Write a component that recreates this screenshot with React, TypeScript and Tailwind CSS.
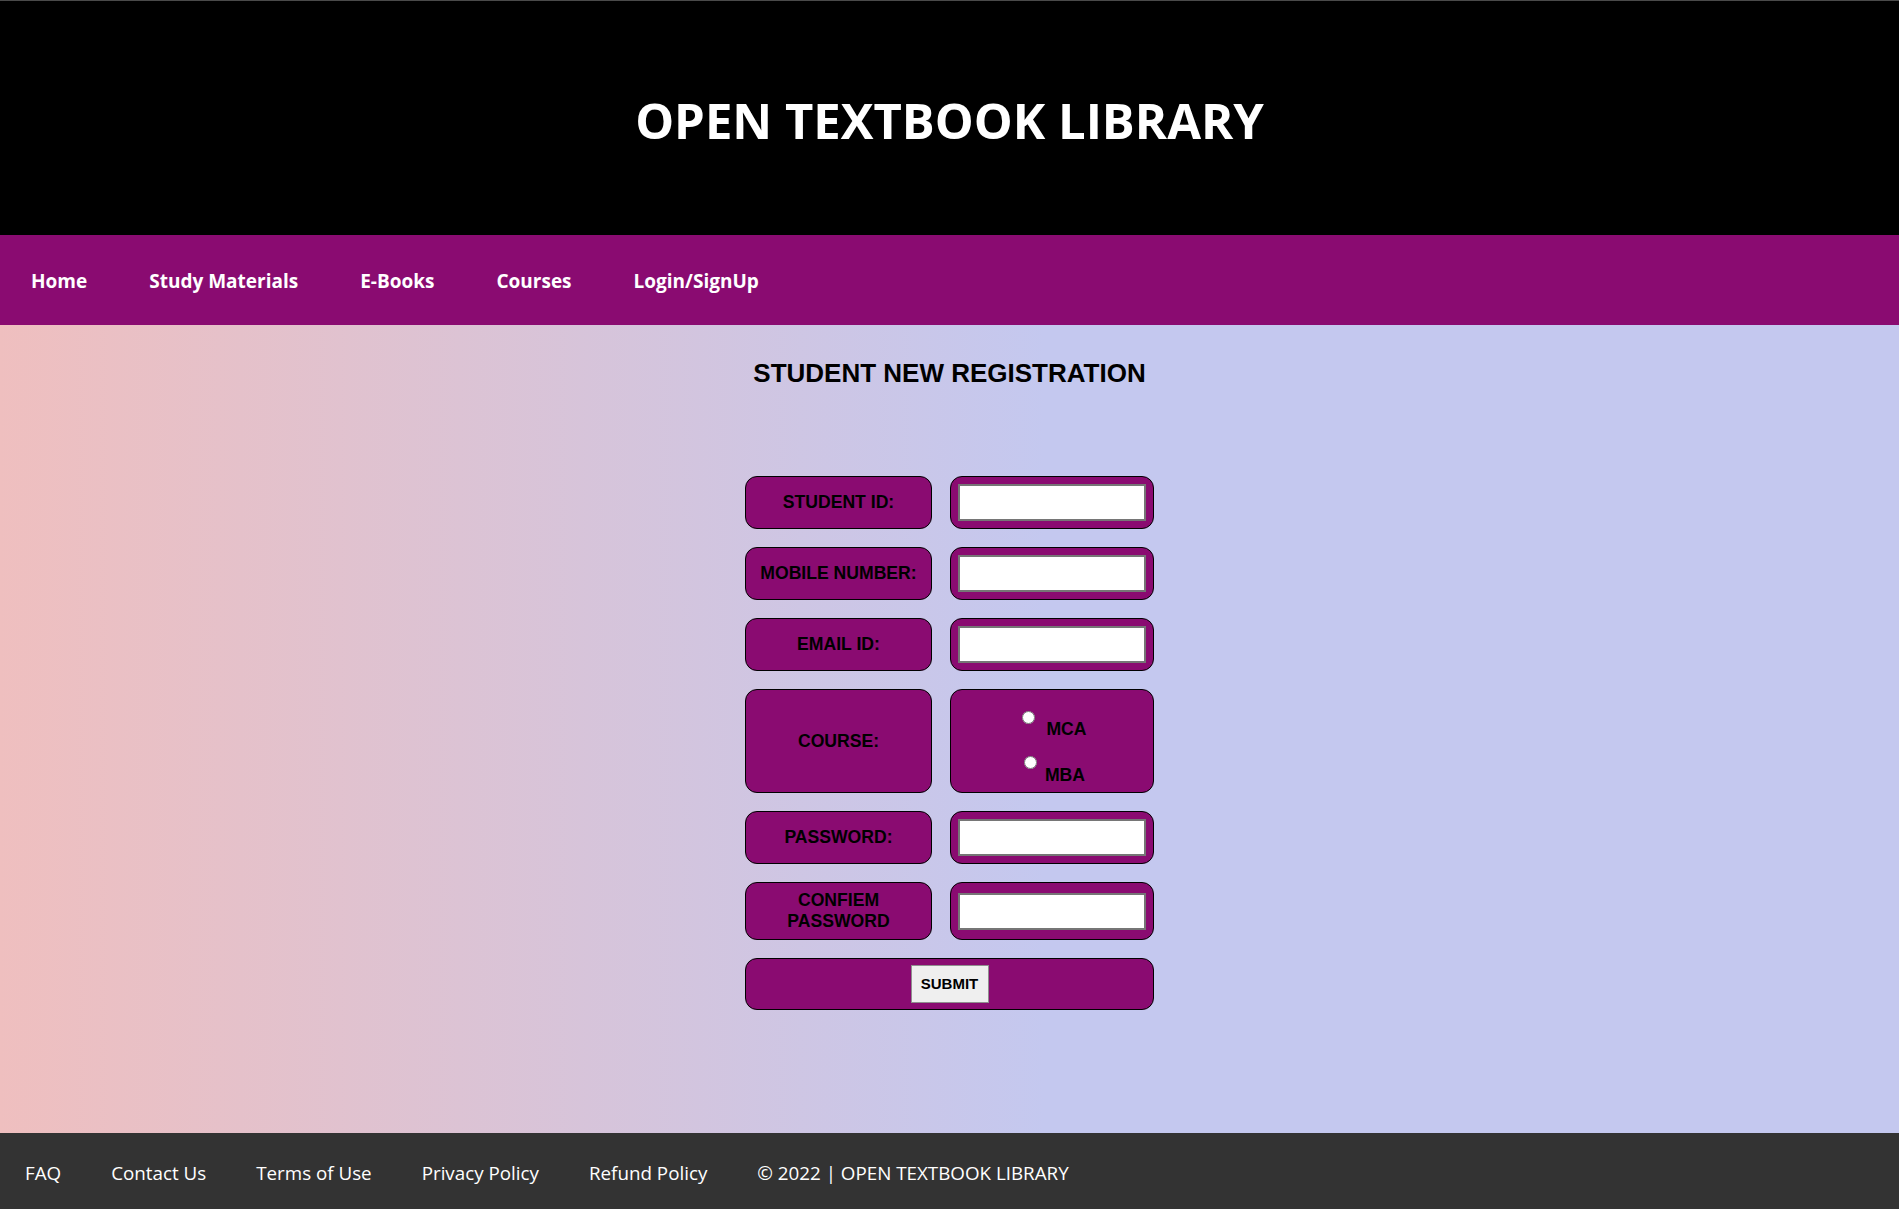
import React from "react";

const navLinks = ["Home", "Study Materials", "E-Books", "Courses", "Login/SignUp"];
const footerLinks = ["FAQ", "Contact Us", "Terms of Use", "Privacy Policy", "Refund Policy", "© 2022 | OPEN TEXTBOOK LIBRARY"];

function LabelCell({ children }: { children: React.ReactNode }) {
  return (
    <div className="flex items-center justify-center text-center border border-black rounded-[12px] bg-[#8a0b71] px-[7px] py-[7px] text-[17.6px] leading-[21px] font-bold text-black">
      {children}
    </div>
  );
}

function InputCell({ type = "text" }: { type?: string }) {
  return (
    <div className="flex items-center border border-black rounded-[12px] bg-[#8a0b71] px-[7px] py-[7px]">
      <input type={type} className="block w-full h-[37px] bg-white border-2 border-[#767676] outline-none px-[2px]" />
    </div>
  );
}

export default function App() {
  return (
    <div className="min-h-screen flex flex-col font-['Liberation_Sans',Arial,sans-serif]">
      <header className="h-[235px] bg-black border-t border-[#4a4a4a] flex items-center justify-center pt-[4px]">
        <h1 className="text-white font-bold text-[49px] leading-[60px] font-['Open_Sans',sans-serif]">
          OPEN TEXTBOOK LIBRARY
        </h1>
      </header>
      <nav className="h-[90px] bg-[#8a0b71] flex items-center font-['Open_Sans',sans-serif]">
        {navLinks.map((l) => (
          <a key={l} href="#" className="px-[31px] text-white font-bold text-[19px] leading-[26px] pt-[1px]">
            {l}
          </a>
        ))}
      </nav>
      <main className="flex-1 bg-[linear-gradient(to_right,#efbfbf,#c4c8ef_55%)] pt-[33px] pb-[100px]">
        <h2 className="text-center font-bold text-[26px] leading-[30px] text-black">STUDENT NEW REGISTRATION</h2>
        <form className="mt-[88px] mx-auto w-[409px] grid grid-cols-[187px_204px] gap-[18px]" onSubmit={(e) => e.preventDefault()}>
          <LabelCell>STUDENT ID:</LabelCell>
          <InputCell />
          <LabelCell>MOBILE NUMBER:</LabelCell>
          <InputCell />
          <LabelCell>EMAIL ID:</LabelCell>
          <InputCell />
          <LabelCell>COURSE:</LabelCell>
          <div className="border border-black rounded-[12px] bg-[#8a0b71] px-[7px] py-[7px] text-[17.6px] leading-[21px] font-bold text-black">
            <div className="h-[44px] flex justify-center">
              <input type="radio" name="course" className="w-[13px] h-[13px] mt-[14px] ml-[5px] mr-[3px]" />
              <span className="mt-[22px] ml-[8px]">MCA</span>
            </div>
            <div className="h-[44px] flex justify-center">
              <input type="radio" name="course" className="w-[13px] h-[13px] mt-[15px] ml-[5px] mr-[3px]" />
              <span className="mt-[24px] ml-[5px]">MBA</span>
            </div>
          </div>
          <LabelCell>PASSWORD:</LabelCell>
          <InputCell type="password" />
          <LabelCell>CONFIEM PASSWORD</LabelCell>
          <InputCell type="password" />
          <div className="col-span-2 flex justify-center border border-black rounded-[12px] bg-[#8a0b71] px-[7px] py-[6px]">
            <button type="submit" className="w-[78px] h-[38px] bg-[#efefef] border border-[#8f8f8f] text-black font-bold text-[15px]">
              SUBMIT
            </button>
          </div>
        </form>
      </main>
      <footer className="h-[76px] bg-[#333333] flex items-center px-[25px] gap-[50px] pt-[4px] font-['Open_Sans',sans-serif]">
        {footerLinks.map((l) => (
          <span key={l} className="text-white text-[18.8px] leading-[26px]">
            {l}
          </span>
        ))}
      </footer>
    </div>
  );
}
